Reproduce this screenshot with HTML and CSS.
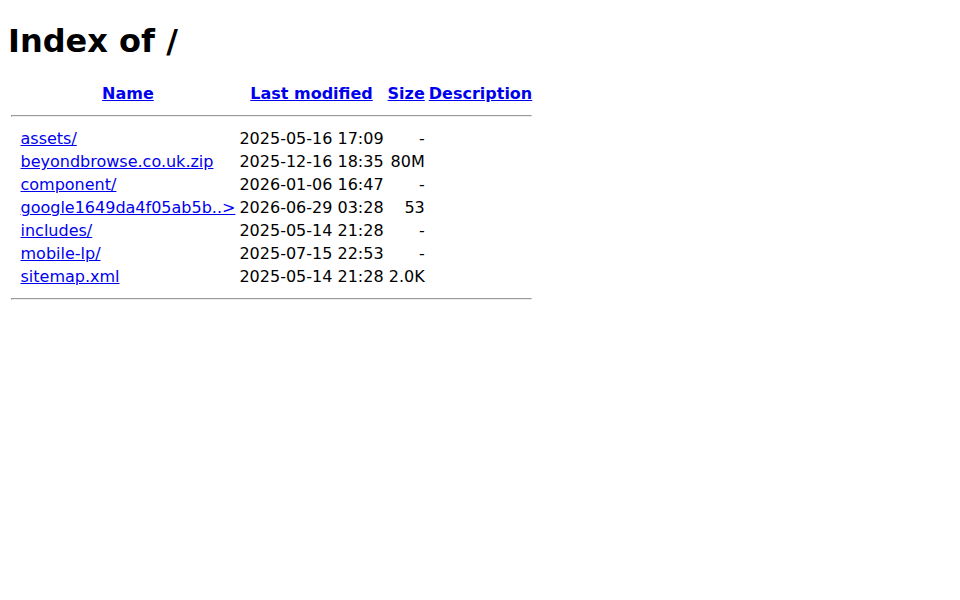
FILE: index.html
```html
<!DOCTYPE html>
<html>
<head>
<title>Index of /</title>
<link rel="stylesheet" href="styles.css">
</head>
<body>
<h1>Index of /</h1>
<table>
<tr><th class="top"><span class="ico"></span></th><th><a href="#">Name</a></th><th><a href="#">Last modified</a></th><th><a href="#">Size</a></th><th><a href="#">Description</a></th></tr>
<tr><th colspan="5"><hr></th></tr>
<tr><td class="top"><span class="ico"></span></td><td><a href="#">assets/</a></td><td class="r">2025-05-16 17:09  </td><td class="r">  - </td><td>&nbsp;</td></tr>
<tr><td class="top"><span class="ico"></span></td><td><a href="#">beyondbrowse.co.uk.zip</a></td><td class="r">2025-12-16 18:35  </td><td class="r"> 80M</td><td>&nbsp;</td></tr>
<tr><td class="top"><span class="ico"></span></td><td><a href="#">component/</a></td><td class="r">2026-01-06 16:47  </td><td class="r">  - </td><td>&nbsp;</td></tr>
<tr><td class="top"><span class="ico"></span></td><td><a href="#">google1649da4f05ab5b..&gt;</a></td><td class="r">2026-06-29 03:28  </td><td class="r"> 53 </td><td>&nbsp;</td></tr>
<tr><td class="top"><span class="ico"></span></td><td><a href="#">includes/</a></td><td class="r">2025-05-14 21:28  </td><td class="r">  - </td><td>&nbsp;</td></tr>
<tr><td class="top"><span class="ico"></span></td><td><a href="#">mobile-lp/</a></td><td class="r">2025-07-15 22:53  </td><td class="r">  - </td><td>&nbsp;</td></tr>
<tr><td class="top"><span class="ico"></span></td><td><a href="#">sitemap.xml</a></td><td class="r">2025-05-14 21:28  </td><td class="r">2.0K</td><td>&nbsp;</td></tr>
<tr><th colspan="5"><hr></th></tr>
</table>
</body>
</html>
```
FILE: styles.css
```css
body {
  font-family: "DejaVu Sans", sans-serif;
  background: #fff;
  color: #000;
}
h1 { margin-top: 14px; }
a { color: #0000ee; }
.top { vertical-align: top; }
.r { text-align: right; }
.ico { display: inline-block; width: 5.5px; height: 1px; }
```
